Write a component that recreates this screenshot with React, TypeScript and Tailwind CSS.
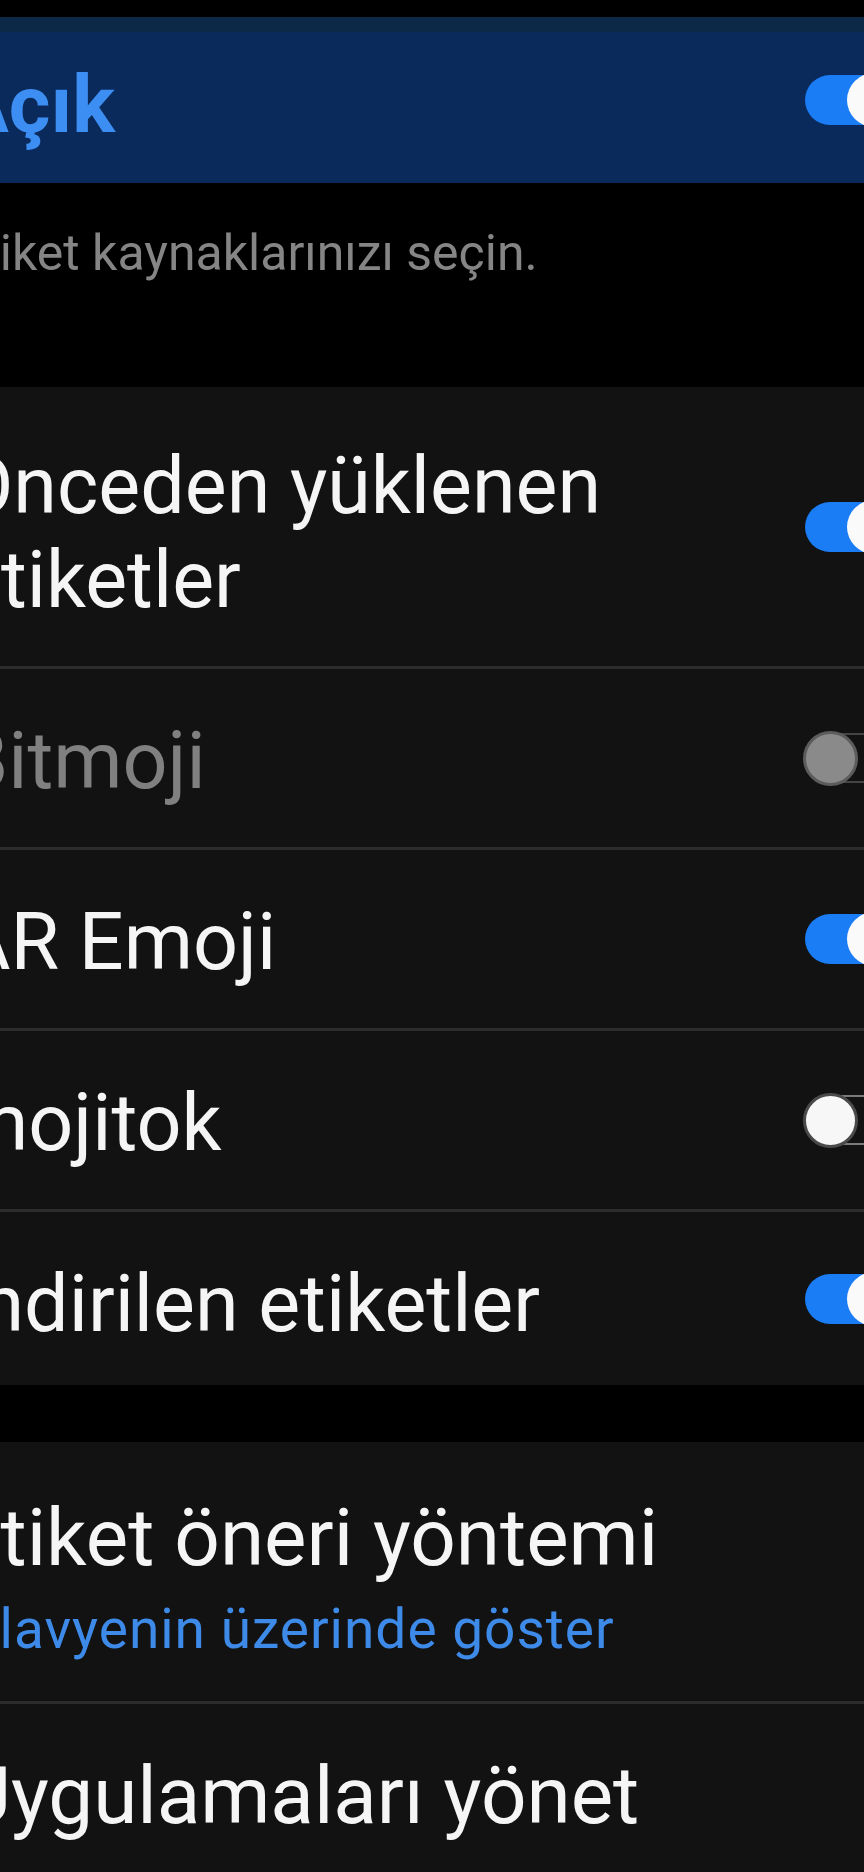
import React from "react";

type ToggleState = "on" | "off" | "disabled";

const Toggle = ({ state }: { state: ToggleState }) => {
  return (
    <div className="relative w-[61px] h-[56px] shrink-0 overflow-hidden">
      {state === "on" ? (
        <>
          <div className="absolute left-[2px] top-[3px] h-[50px] w-[120px] rounded-full bg-[#1a7df6]" />
          <div className="absolute left-[44px] top-[1px] h-[54px] w-[54px] rounded-full bg-[#fafafa]" />
        </>
      ) : (
        <>
          <div
            className={
              state === "off"
                ? "absolute left-[2px] top-[3px] h-[50px] w-[120px] rounded-full border-2 border-[#7a7a7a]"
                : "absolute left-[2px] top-[3px] h-[50px] w-[120px] rounded-full border-2 border-[#444444]"
            }
          />
          <div
            className={
              state === "off"
                ? "absolute left-0 top-[1px] h-[55px] w-[55px] rounded-full bg-[#f7f7f7] border-[3px] border-[#4a4a4a]"
                : "absolute left-0 top-[1px] h-[55px] w-[55px] rounded-full bg-[#8a8a8a] border-[3px] border-[#5c5c5c]"
            }
          />
        </>
      )}
    </div>
  );
};

const Divider = () => <div className="h-[3px] bg-[#2c2c2c]" />;

const Row = ({
  label,
  state,
  height,
}: {
  label: string;
  state: ToggleState;
  height: string;
}) => (
  <div className={`flex items-start ${height}`}>
    <div
      className={
        state === "disabled"
          ? "flex-1 ml-[-41px] pt-[45px] text-[79px] leading-[94px] whitespace-nowrap text-[#808080]"
          : "flex-1 ml-[-41px] pt-[45px] text-[79px] leading-[94px] whitespace-nowrap text-[#f5f5f5]"
      }
    >
      {label}
    </div>
    <div className="self-center">
      <Toggle state={state} />
    </div>
  </div>
);

export default function App() {
  return (
    <div className="w-[864px] h-[1872px] overflow-hidden bg-black font-['Roboto',sans-serif]">
      <div className="h-[17px]" />

      {/* master switch */}
      <div className="flex h-[166px] items-center bg-[linear-gradient(#0c2a48_0_15px,#0a2a5c_15px)]">
        <div className="flex-1 ml-[-45px] pt-[10px] text-[80px] leading-[100px] font-bold text-[#3d8ef2] whitespace-nowrap">
          Açık
        </div>
        <Toggle state="on" />
      </div>

      <p className="ml-[-45px] mt-[39px] text-[50px] leading-[62px] text-[#858585] whitespace-nowrap">
        Etiket kaynaklarınızı seçin.
      </p>

      {/* sticker sources */}
      <div className="mt-[103px] bg-[#121212]">
        <div className="flex h-[279px]">
          <div className="flex-1 ml-[-41px] pt-[52px] text-[79px] leading-[94px] text-[#f5f5f5] whitespace-nowrap">
            Önceden yüklenen
            <br />
            etiketler
          </div>
          <div className="self-center">
            <Toggle state="on" />
          </div>
        </div>
        <Divider />
        <Row label="Bitmoji" state="disabled" height="h-[178px]" />
        <Divider />
        <Row label="AR Emoji" state="on" height="h-[178px]" />
        <Divider />
        <Row label="mojitok" state="off" height="h-[178px]" />
        <Divider />
        <Row label="İndirilen etiketler" state="on" height="h-[173px]" />
      </div>

      {/* other settings */}
      <div className="mt-[57px] bg-[#121212]">
        <div className="h-[259px] pt-[49px]">
          <div className="ml-[-45px] text-[80px] leading-[94px] text-[#f5f5f5] whitespace-nowrap">
            Etiket öneri yöntemi
          </div>
          <div className="ml-[-36px] mt-[12px] text-[55px] leading-[64px] tracking-[1px] text-[#3d8ae8] whitespace-nowrap">
            Klavyenin üzerinde göster
          </div>
        </div>
        <Divider />
        <div className="h-[300px] pt-[45px]">
          <div className="ml-[-41px] text-[80px] leading-[94px] text-[#f5f5f5] whitespace-nowrap">
            Uygulamaları yönet
          </div>
        </div>
      </div>
    </div>
  );
}
